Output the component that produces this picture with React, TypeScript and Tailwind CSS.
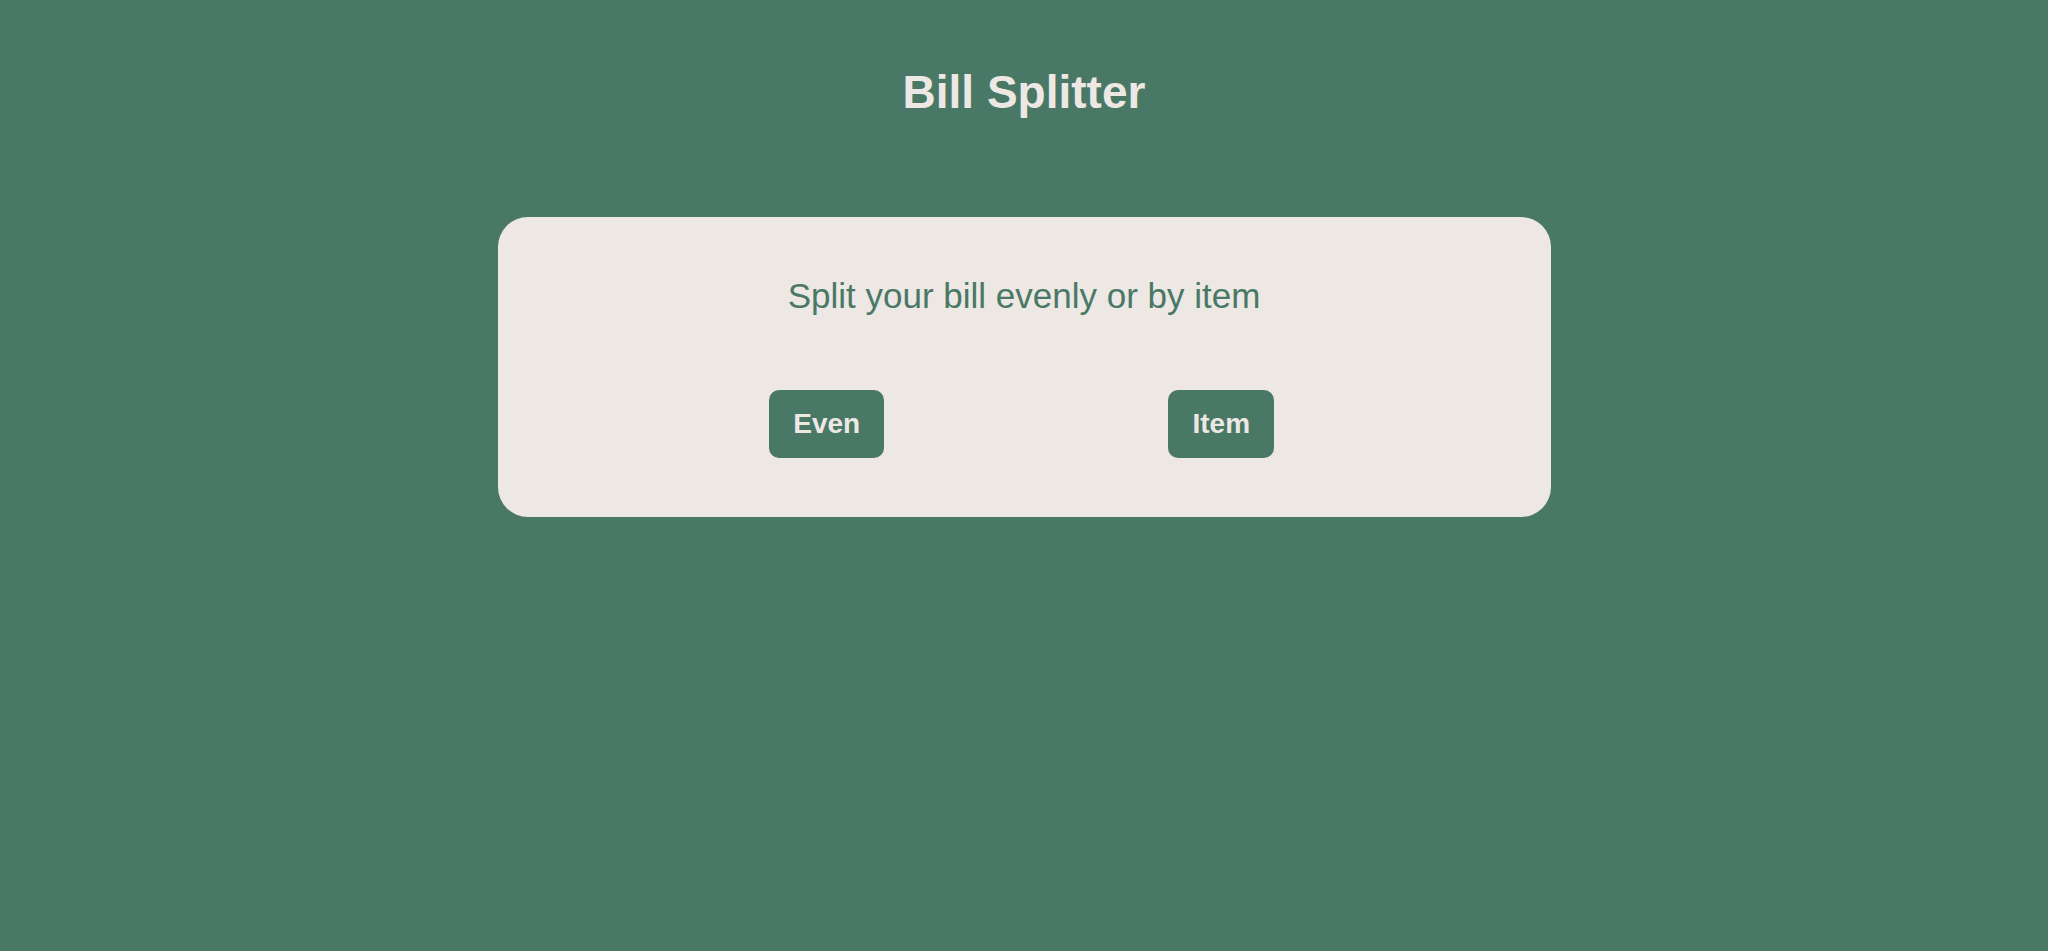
export default function App() {
  return (
    <div className="min-h-screen bg-[#4a7866] flex flex-col items-center font-['Liberation_Sans',Arial,sans-serif]">
      <h1 className="pt-[66px] text-[46px] leading-[53px] font-bold text-[#ede8e4]">
        Bill Splitter
      </h1>
      <div className="mt-[98px] w-[1053px] rounded-[30px] bg-[#ede8e4] pt-[59px] pb-[59px] flex flex-col items-center">
        <p className="text-[35px] leading-[40px] text-[#4a7866]">
          Split your bill evenly or by item
        </p>
        <div className="mt-[74px] w-[789px] grid grid-cols-2">
          <div className="flex justify-center">
            <button className="px-[24px] py-[18px] rounded-[10px] bg-[#4a7866] text-[#ede8e4] text-[28px] leading-[32px] font-bold">
              Even
            </button>
          </div>
          <div className="flex justify-center">
            <button className="px-[24px] py-[18px] rounded-[10px] bg-[#4a7866] text-[#ede8e4] text-[28px] leading-[32px] font-bold">
              Item
            </button>
          </div>
        </div>
      </div>
    </div>
  )
}
